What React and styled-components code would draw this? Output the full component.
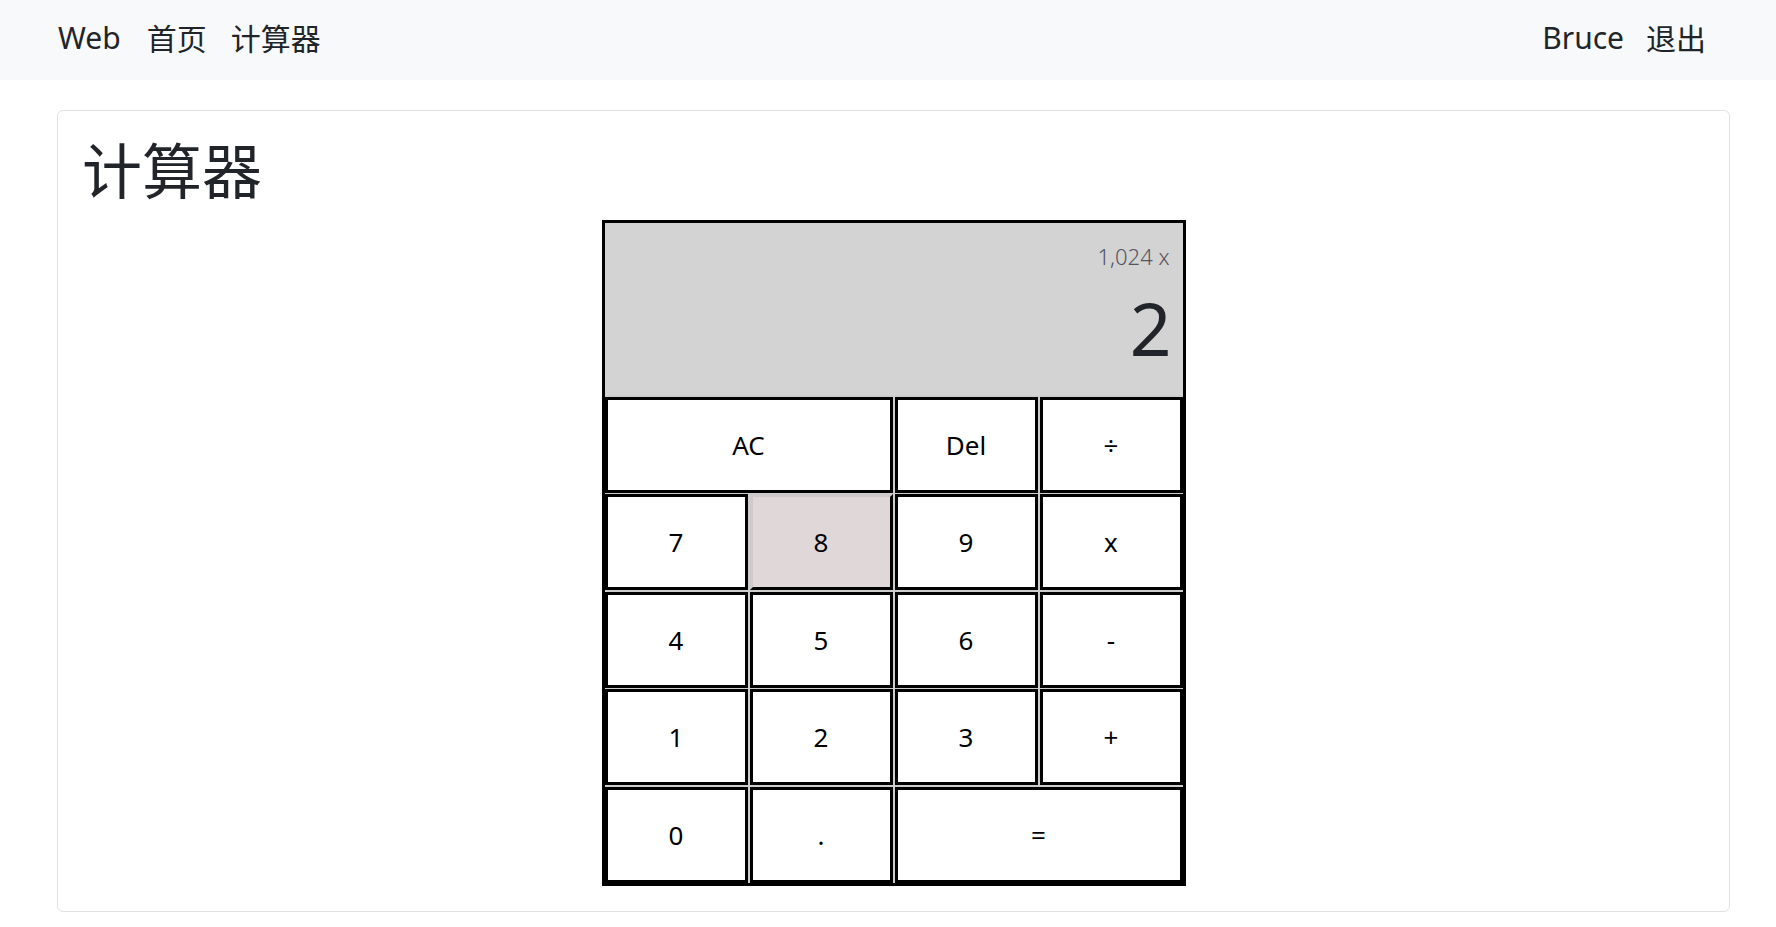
import React from 'react';
import styled, { createGlobalStyle } from 'styled-components';

const GlobalStyle = createGlobalStyle`
  * {
    box-sizing: border-box;
  }
  body {
    margin: 0;
    background: #fff;
    color: #212529;
    font-family: "Noto Sans", "Noto Sans CJK SC", sans-serif;
  }
`;

const keys = [
  { label: 'AC', span: 2 },
  { label: 'Del' },
  { label: '÷' },
  { label: '7' },
  { label: '8', hover: true },
  { label: '9' },
  { label: 'x' },
  { label: '4' },
  { label: '5' },
  { label: '6' },
  { label: '-' },
  { label: '1' },
  { label: '2' },
  { label: '3' },
  { label: '+' },
  { label: '0' },
  { label: '.' },
  { label: '=', span: 2 },
];

export default function App() {
  return (
    <>
      <GlobalStyle />
      <Navbar>
        <NavGroup>
          <Brand>Web</Brand>
          <NavLink>首页</NavLink>
          <NavLink>计算器</NavLink>
        </NavGroup>
        <NavGroup>
          <NavLink $user>Bruce</NavLink>
          <NavLink $last>退出</NavLink>
        </NavGroup>
      </Navbar>
      <Main>
        <Card>
          <Title>计算器</Title>
          <Calculator>
            <Output>
              <LastOperand>1,024 x</LastOperand>
              <CurrentOperand>2</CurrentOperand>
            </Output>
            {keys.map(k => (
              <Key key={k.label} $span={k.span} $hover={k.hover}>
                {k.label}
              </Key>
            ))}
          </Calculator>
        </Card>
      </Main>
    </>
  );
}

const Navbar = styled.nav`
  display: flex;
  justify-content: space-between;
  align-items: center;
  height: 80px;
  padding: 0 58px 6px 46px;
  background-color: #f8f9fa;
`;

const NavGroup = styled.div`
  display: flex;
  align-items: center;
`;

const Brand = styled.a`
  font-size: 30px;
  color: #212529;
  padding: 0 12px;
  cursor: pointer;
`;

const NavLink = styled.a`
  font-size: 30px;
  color: #212529;
  padding: ${p => {
    if (p.$last) return '0 12px 0 10px';
    if (p.$user) return '0 12px';
    return '0 10px 0 14px';
  }};
  cursor: pointer;
`;

const Main = styled.main`
  padding: 30px 46px 16px 57px;
`;

const Card = styled.div`
  border: 1px solid #dfe1e3;
  border-radius: 6px;
  padding: 24px 24px 25px;
`;

const Title = styled.h1`
  margin: 0 0 13px;
  font-size: 60px;
  font-weight: 400;
  line-height: 1.2;
  color: #212529;
`;

const Calculator = styled.div`
  display: grid;
  grid-template-columns: repeat(4, 1fr);
  grid-template-rows: 172px repeat(5, 96px);
  gap: 1.5px 2px;
  width: 584px;
  margin: 0 auto;
  border: 3px solid #000;
  background-color: #cdcdcd;
`;

const Output = styled.div`
  grid-column: 1 / span 4;
  display: flex;
  flex-direction: column;
  align-items: flex-end;
  gap: 21px;
  padding: 20px 13px 10px;
  background-color: lightgray;
`;

const LastOperand = styled.div`
  font-size: 22px;
  line-height: 27px;
  font-weight: 300;
  color: #555560;
`;

const CurrentOperand = styled.div`
  font-size: 73px;
  line-height: 73px;
  font-weight: 400;
  color: #212529;
  margin-right: -2px;
`;

const Key = styled.button`
  grid-column: ${p => (p.$span ? `span ${p.$span}` : 'auto')};
  appearance: none;
  margin: 0;
  padding: 0;
  border: 3px solid #000;
  border-top-color: ${p => (p.$hover ? '#cfc9ca' : '#000')};
  border-left-color: ${p => (p.$hover ? '#cfc9ca' : '#000')};
  background-color: ${p => (p.$hover ? '#dfd7d8' : '#fff')};
  color: #000;
  font-family: "Noto Sans", "Noto Sans CJK SC", sans-serif;
  font-size: 26px;
  cursor: pointer;
  outline: none;
`;
